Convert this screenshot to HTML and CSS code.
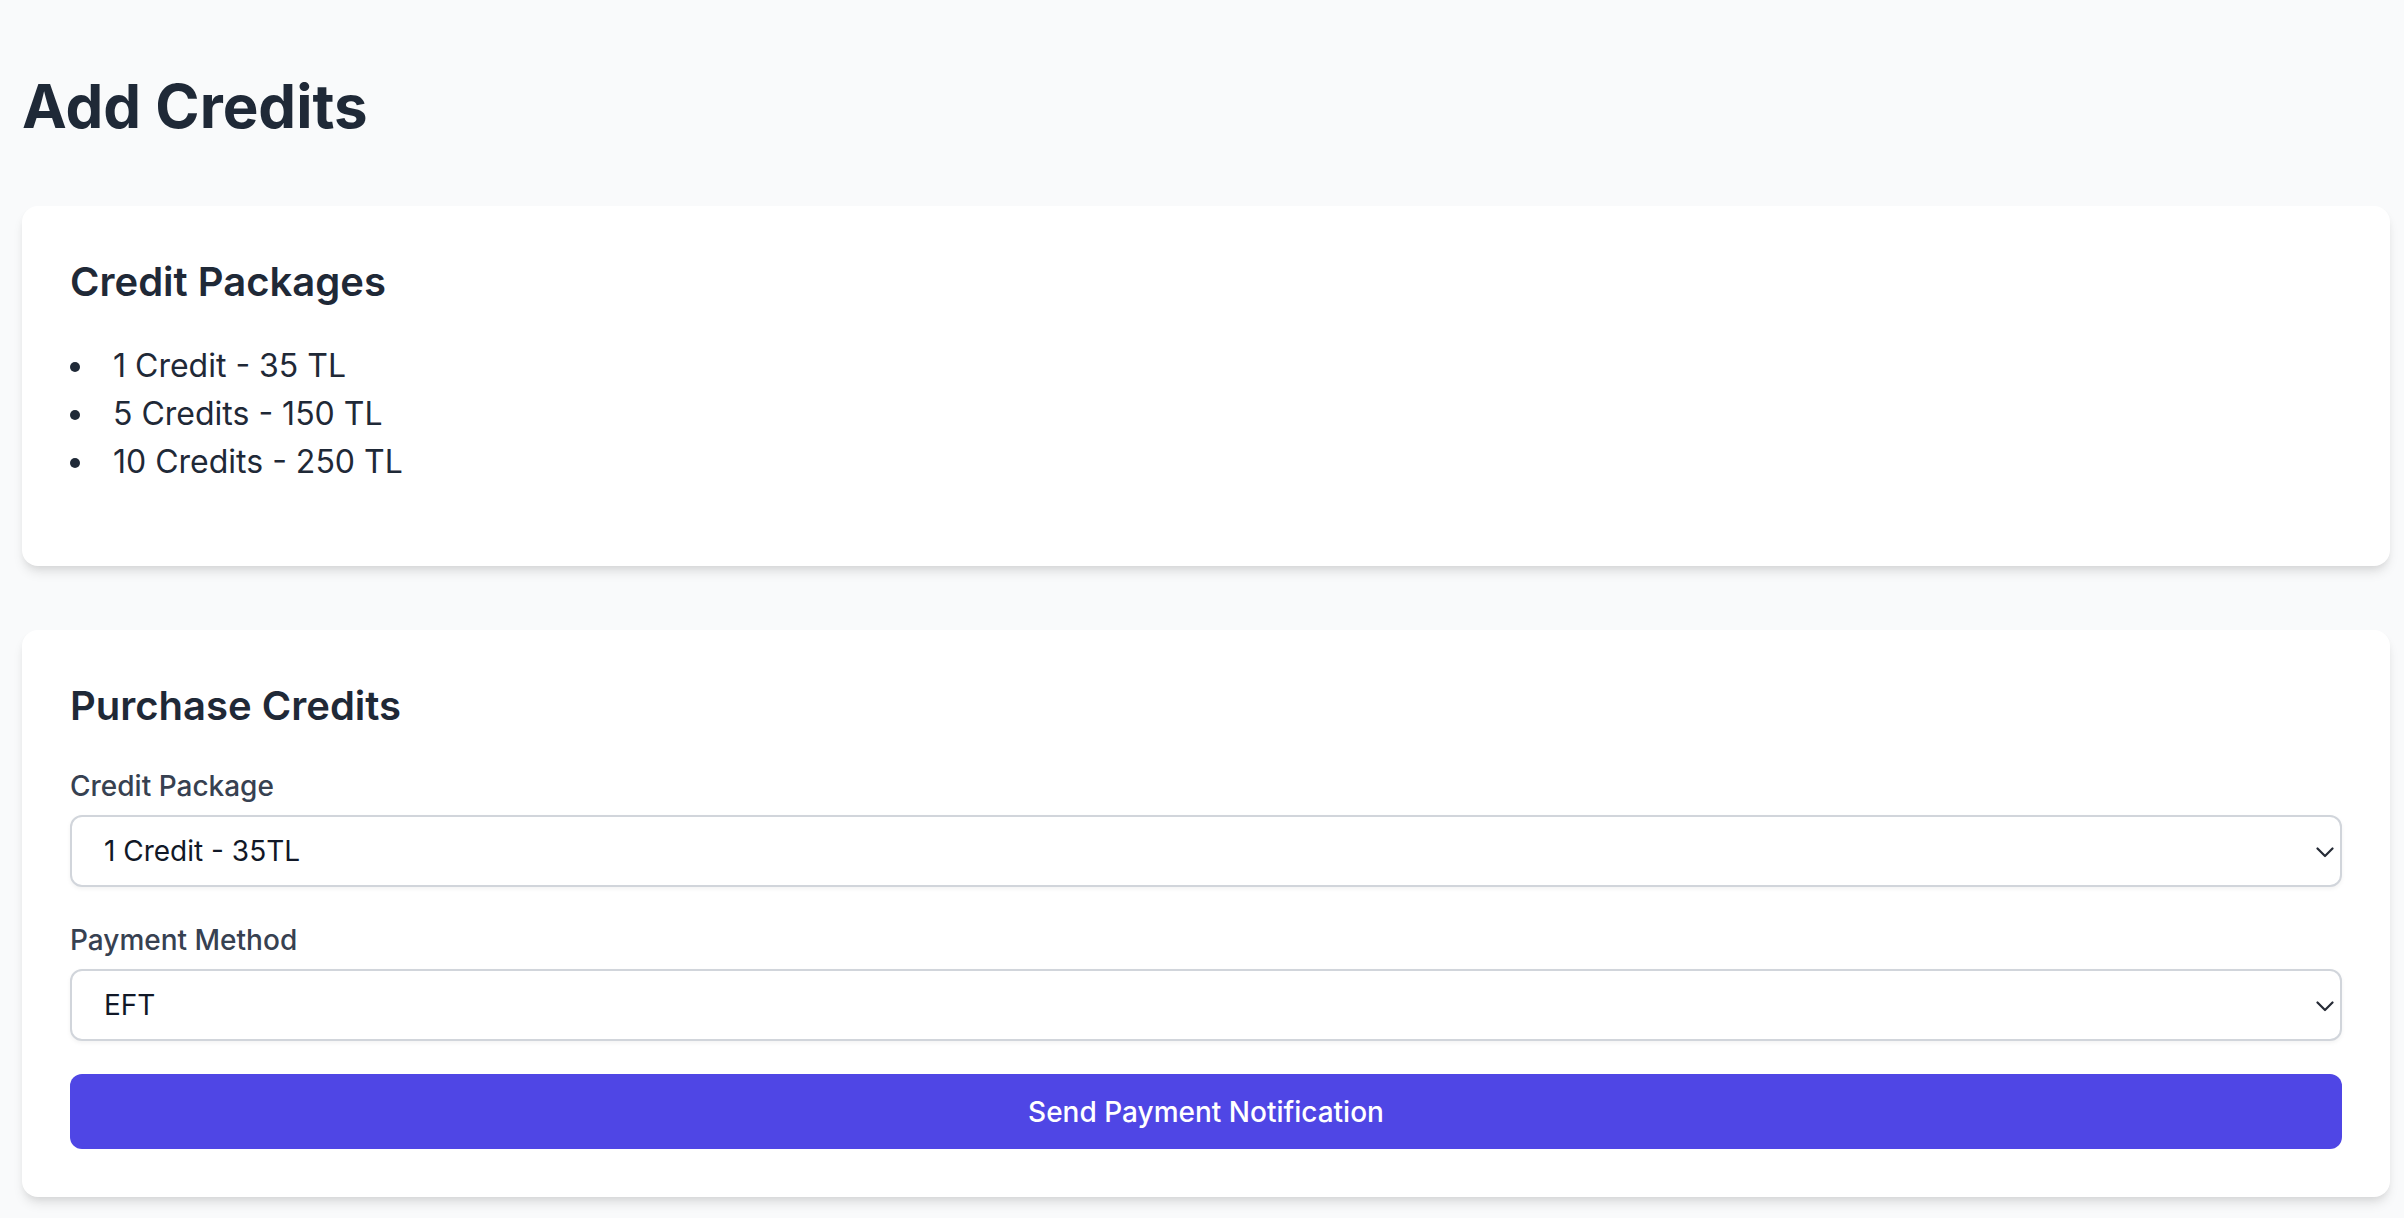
FILE: index.html
```html
<!DOCTYPE html>
<html lang="en">
<head>
  <meta charset="UTF-8">
  <meta name="viewport" content="width=device-width, initial-scale=1.0">
  <title>Add Credits</title>
  <link rel="stylesheet" href="styles.css">
</head>
<body>
  <main class="page">
    <h1 class="page-title">Add Credits</h1>

    <section class="card">
      <h2 class="card-title">Credit Packages</h2>
      <ul class="package-list">
        <li>1 Credit - 35 TL</li>
        <li>5 Credits - 150 TL</li>
        <li>10 Credits - 250 TL</li>
      </ul>
    </section>

    <section class="card">
      <h2 class="card-title">Purchase Credits</h2>
      <form class="purchase-form" onsubmit="return false;">
        <div class="field">
          <label class="field-label" for="package">Credit Package</label>
          <div class="select-wrap">
            <select id="package" class="field-select">
              <option>1 Credit - 35TL</option>
              <option>5 Credits - 150TL</option>
              <option>10 Credits - 250TL</option>
            </select>
            <svg class="select-arrow" width="18" height="11" viewBox="0 0 18 11" fill="none">
              <path d="M1.5 1.5 L9 9 L16.5 1.5" stroke="#262b36" stroke-width="2.2" stroke-linecap="round" stroke-linejoin="round"/>
            </svg>
          </div>
        </div>
        <div class="field">
          <label class="field-label" for="method">Payment Method</label>
          <div class="select-wrap">
            <select id="method" class="field-select">
              <option>EFT</option>
            </select>
            <svg class="select-arrow" width="18" height="11" viewBox="0 0 18 11" fill="none">
              <path d="M1.5 1.5 L9 9 L16.5 1.5" stroke="#262b36" stroke-width="2.2" stroke-linecap="round" stroke-linejoin="round"/>
            </svg>
          </div>
        </div>
        <button type="submit" class="submit-button">Send Payment Notification</button>
      </form>
    </section>
  </main>
</body>
</html>
```

FILE: styles.css
```css
body {
  margin: 0;
  background-color: #f9fafb;
  font-family: Inter, "Noto Sans", sans-serif;
  color: #1f2937;
}
.page {
  padding: 70px 14px 21px 22px;
}
.page-title {
  margin: 0 0 64px;
  font-size: 60px;
  line-height: 72px;
  font-weight: 700;
  color: #1f2937;
}
.card {
  background-color: #fff;
  border-radius: 16px;
  padding: 48px;
  margin-bottom: 64px;
  box-shadow: 0 8px 12px -2px rgba(0, 0, 0, 0.1), 0 4px 8px -4px rgba(0, 0, 0, 0.1);
}
.card:last-child {
  margin-bottom: 0;
}
.card-title {
  margin: 0 0 32px;
  font-size: 40px;
  line-height: 56px;
  font-weight: 600;
  color: #1f2937;
}
.package-list {
  list-style: disc inside;
  margin: 0 0 32px;
  padding: 0;
  font-size: 32px;
  line-height: 48px;
}
.field {
  margin-bottom: 33px;
}
.field-label {
  display: block;
  font-size: 28px;
  line-height: 40px;
  font-weight: 500;
  color: #374151;
  margin-bottom: 9px;
}
.select-wrap {
  position: relative;
}
.field-select {
  display: block;
  width: 100%;
  height: 72px;
  box-sizing: border-box;
  appearance: none;
  -webkit-appearance: none;
  background-color: #fff;
  border: 2px solid #d1d5db;
  border-radius: 12px;
  padding: 0 60px 0 32px;
  font-family: inherit;
  font-size: 28px;
  color: #111827;
  box-shadow: 0 2px 4px rgba(0, 0, 0, 0.05);
}
.select-arrow {
  position: absolute;
  right: 8px;
  top: 32px;
  pointer-events: none;
}
.submit-button {
  display: block;
  width: 100%;
  height: 75px;
  border: none;
  border-radius: 12px;
  background-color: #4f46e5;
  color: #fff;
  font-family: inherit;
  font-size: 28px;
  font-weight: 500;
  cursor: pointer;
}
```
